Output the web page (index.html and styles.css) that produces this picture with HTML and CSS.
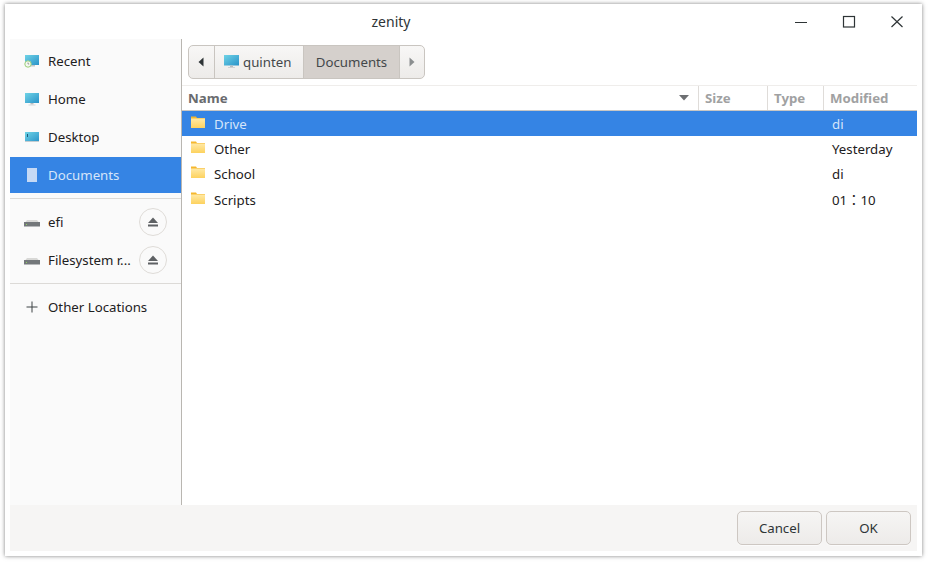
FILE: index.html
```html
<!DOCTYPE html>
<html lang="en">
<head>
<meta charset="utf-8">
<title>zenity</title>
<link rel="stylesheet" href="styles.css">
</head>
<body>
<div class="window">
  <header class="titlebar">
    <span class="title">zenity</span>
    <div class="controls">
      <svg class="ctl" width="14" height="14" viewBox="0 0 14 14"><path d="M1 7.500h12" stroke="#2e3436" stroke-width="1" fill="none"/></svg>
      <svg class="ctl" width="14" height="14" viewBox="0 0 14 14"><rect x="1.500" y="1.500" width="11" height="10.500" fill="none" stroke="#2e3436" stroke-width="1.200"/></svg>
      <svg class="ctl" width="14" height="14" viewBox="0 0 14 14"><path d="M1.500 1.500l11 10.500M12.500 1.500l-11 10.500" stroke="#2e3436" stroke-width="1.200" fill="none"/></svg>
    </div>
  </header>
  <div class="main">
    <aside class="sidebar">
      <div class="side-row">
        <svg class="side-icon" width="16" height="16" viewBox="0 0 16 16"><defs><linearGradient id="sc" x1="0" y1="0" x2="1" y2="1"><stop offset="0" stop-color="#6fd3e6"/><stop offset="1" stop-color="#2a93c9"/></linearGradient></defs><rect x="1" y="2" width="14" height="10" fill="url(#sc)"/><rect x="5" y="12" width="6" height="1.500" fill="#c4c8ca"/><circle cx="4" cy="11" r="3.200" fill="#f4f8f0" stroke="#9ccf7a" stroke-width="1"/><path d="M4 9.500V11h1.200" stroke="#777" stroke-width=".7" fill="none"/></svg>
        <span class="side-label">Recent</span>
      </div>
      <div class="side-row">
        <svg class="side-icon" width="16" height="16" viewBox="0 0 16 16"><rect x="1" y="2" width="14" height="10" fill="url(#sc)"/><rect x="6.500" y="12" width="3" height="1.500" fill="#b8bcbe"/><rect x="4.500" y="13.500" width="7" height="1" fill="#d6d8da"/></svg>
        <span class="side-label">Home</span>
      </div>
      <div class="side-row">
        <svg class="side-icon" width="16" height="16" viewBox="0 0 16 16"><rect x="1" y="3" width="14" height="10" fill="url(#sc)"/><rect x="1" y="12" width="14" height="1" fill="#c4ccd0"/><rect x="3" y="5" width="1" height="3" fill="#1e5a78"/></svg>
        <span class="side-label">Desktop</span>
      </div>
      <div class="side-row selected">
        <svg class="side-icon" width="16" height="16" viewBox="0 0 16 16"><rect x="3" y="1" width="10" height="14" fill="#c5d9f5"/></svg>
        <span class="side-label">Documents</span>
      </div>
      <div class="side-sep"></div>
      <div class="side-row">
        <svg class="side-icon" width="16" height="16" viewBox="0 0 16 16"><path d="M1 8.500L3 6h10l2 2.500z" fill="#d8d8d6"/><rect x="0" y="8" width="16" height="4.500" fill="#73777a"/><rect x="2" y="10" width="1" height="1" fill="#8fd35f"/></svg>
        <span class="side-label">efi</span>
        <span class="eject"><svg width="12" height="12" viewBox="0 0 12 12"><path d="M6 1.500L11 7H1z" fill="#5e6164"/><rect x="1" y="8.500" width="10" height="2" fill="#5e6164"/></svg></span>
      </div>
      <div class="side-row">
        <svg class="side-icon" width="16" height="16" viewBox="0 0 16 16"><path d="M1 8.500L3 6h10l2 2.500z" fill="#d8d8d6"/><rect x="0" y="8" width="16" height="4.500" fill="#73777a"/><rect x="2" y="10" width="1" height="1" fill="#8fd35f"/></svg>
        <span class="side-label">Filesystem r...</span>
        <span class="eject"><svg width="12" height="12" viewBox="0 0 12 12"><path d="M6 1.500L11 7H1z" fill="#5e6164"/><rect x="1" y="8.500" width="10" height="2" fill="#5e6164"/></svg></span>
      </div>
      <div class="side-sep"></div>
      <div class="side-row">
        <svg class="side-icon" width="16" height="16" viewBox="0 0 16 16"><path d="M8 2.500v11M2.500 8h11" stroke="#3d4245" stroke-width="1" fill="none"/></svg>
        <span class="side-label">Other Locations</span>
      </div>
    </aside>
    <section class="content">
      <div class="pathbar-wrap">
        <nav class="pathbar">
          <span class="seg arrow start"><svg width="6" height="10" viewBox="0 0 6 10"><path d="M5.500 0.500v9L0.500 5z" fill="#2e3436"/></svg></span>
          <span class="seg crumb home"><svg width="16" height="16" viewBox="0 0 16 16"><rect x="0" y="1" width="15" height="10.500" fill="url(#sc)"/><rect x="6" y="11.500" width="3" height="1.500" fill="#b8bcbe"/><rect x="4" y="13" width="7" height="1" fill="#cfd2d4"/></svg>quinten</span>
          <span class="seg crumb active">Documents</span>
          <span class="seg arrow end"><svg width="6" height="10" viewBox="0 0 6 10"><path d="M.5 0.500v9L5.500 5z" fill="#8b8e8f"/></svg></span>
        </nav>
      </div>
      <div class="columns">
        <div class="col col-name primary">Name<svg class="sort" width="10" height="6" viewBox="0 0 10 6"><path d="M0 0h10L5 5.500z" fill="#6d6f72"/></svg></div>
        <div class="col col-size">Size</div>
        <div class="col col-type">Type</div>
        <div class="col col-mod">Modified</div>
      </div>
      <div class="file selected">
        <div class="cell-name"><svg class="folder" width="16" height="14" viewBox="0 0 16 14"><use href="#fld"/></svg>Drive</div>
        <div class="cell-mod">di</div>
      </div>
      <div class="file">
        <div class="cell-name"><svg class="folder" width="16" height="14" viewBox="0 0 16 14"><use href="#fld"/></svg>Other</div>
        <div class="cell-mod">Yesterday</div>
      </div>
      <div class="file">
        <div class="cell-name"><svg class="folder" width="16" height="14" viewBox="0 0 16 14"><use href="#fld"/></svg>School</div>
        <div class="cell-mod">di</div>
      </div>
      <div class="file">
        <div class="cell-name"><svg class="folder" width="16" height="14" viewBox="0 0 16 14"><use href="#fld"/></svg>Scripts</div>
        <div class="cell-mod">01：10</div>
      </div>
    </section>
  </div>
  <footer class="footer">
    <button class="btn">Cancel</button>
    <button class="btn">OK</button>
  </footer>
</div>
<svg class="defs" width="0" height="0"><defs>
  <linearGradient id="fg" x1="0" y1="0" x2="0" y2="1"><stop offset="0" stop-color="#ffe9a6"/><stop offset="1" stop-color="#fdd25e"/></linearGradient>
  <g id="fld"><path d="M1 1.500h5l1 1.500h8v9.500H1z" fill="#f5b72e"/><rect x="1" y="3.500" width="14" height="9.500" fill="url(#fg)"/></g>
</defs></svg>
</body>
</html>
```
FILE: styles.css
```css
* { box-sizing: border-box; }
html, body { margin: 0; height: 100%; background: #fff; overflow: hidden; }
body { padding: 4px 8px 9px 5px; font-family: "Noto Sans", "Noto Sans CJK JP", sans-serif; font-size: 13.250px; color: #2e3436; }
.window { height: 552px; display: flex; flex-direction: column; padding: 0 5px 5px; background: #fff; box-shadow: 0 0 4px rgba(0,0,0,.5); }
.titlebar { height: 35px; flex: none; display: flex; align-items: center; justify-content: center; position: relative; padding-right: 145px; }
.title { font-size: 14px; color: #2e3436; margin-top: -1px; }
.controls { position: absolute; right: 13px; top: 11px; display: flex; gap: 34px; }
.main { flex: 1; display: flex; min-height: 0; }
.sidebar { width: 172px; flex: none; background: #fafafa; border-right: 1px solid #b9b6b1; padding-top: 4px; }
.side-row { height: 36px; margin-bottom: 2px; display: flex; align-items: center; padding-left: 14px; color: #1d2021; }
.side-row.selected { background: #3584e4; color: #d5e5fa; }
.side-icon { flex: none; margin-right: 8px; }
.side-label { flex: 1; white-space: nowrap; }
.side-sep { height: 1px; background: #dcdad7; margin: 5px 0; }
.eject { width: 28px; height: 28px; border-radius: 50%; border: 1px solid #dfdcd8; margin-right: 14px; display: flex; align-items: center; justify-content: center; flex: none; background: #fafafa; }
.content { flex: 1; background: #fff; min-width: 0; }
.pathbar-wrap { height: 47px; padding: 6px 6px 0; border-bottom: 1px solid #efedeb; }
.pathbar { display: inline-flex; height: 34px; border: 1px solid #c9c5c0; border-radius: 5px; overflow: hidden; background: linear-gradient(#f8f7f6, #edebe9); }
.seg { display: flex; align-items: center; justify-content: center; color: #44484a; border-right: 1px solid #c9c5c0; }
.seg.arrow { width: 26px; }
.seg.arrow.start { padding-right: 2px; }
.seg.arrow.end { width: 24px; border-right: 0; }
.seg.crumb { gap: 3px; width: 89px; color: #44484a; }
.seg.crumb.home { justify-content: flex-start; padding-left: 9px; }
.seg.crumb.active { width: 96px; background: #d5d0cc; }
.columns { height: 25px; display: flex; border-bottom: 1px solid #c9c7c4; font-weight: 700; color: #a0a1a2; }
.col { display: flex; align-items: center; padding-left: 6px; border-right: 1px solid #dfdcd9; }
.col.primary { color: #696b6e; }
.col-name { width: 517px; justify-content: space-between; padding-right: 9px; }
.sort { flex: none; }
.col-size { width: 69px; }
.col-type { width: 56px; }
.col-mod { flex: 1; border-right: 0; }
.file { height: 25.300px; display: flex; align-items: center; justify-content: space-between; color: #1d2021; }
.file.selected { background: #3584e4; color: #d5e5fa; }
.cell-name { display: flex; align-items: center; padding-left: 8px; }
.folder { margin-right: 8px; margin-top: -4px; flex: none; }
.cell-mod { width: 85px; }
.footer { height: 46px; flex: none; background: #f6f5f4; display: flex; justify-content: flex-end; align-items: center; gap: 4px; padding: 0 6px 0 0; }
.btn { width: 85px; height: 34px; border: 1px solid #cdc7c2; border-radius: 5px; background: linear-gradient(#f6f5f4, #edebe9); font: 13.250px "Noto Sans", sans-serif; color: #2e3436; padding: 0; box-shadow: 0 1px 0 rgba(255,255,255,.6); }
.defs { position: absolute; }
```
